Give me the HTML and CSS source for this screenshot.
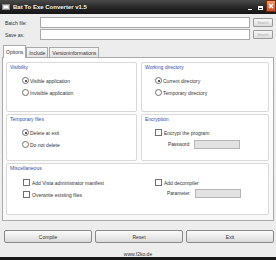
FILE: index.html
```html
<!DOCTYPE html>
<html>
<head>
<meta charset="utf-8">
<link rel="stylesheet" href="styles.css">
</head>
<body>
<div class="win">
  <div class="titlebar">
    <span class="appicon"><span class="appscreen"></span></span>
    <span class="title">Bat To Exe Converter v1.5</span>
    <span class="ctl min"><span></span></span>
    <span class="ctl max"><span></span></span>
    <span class="ctl close"><svg width="6" height="6" viewBox="0 0 6 6"><path d="M1 1L5 5M5 1L1 5" stroke="#fff" stroke-width="1.4"/></svg></span>
  </div>
  <div class="body">
    <div class="filerow">
      <span class="flabel">Batch file:</span>
      <span class="finput"></span>
      <span class="fbtn">Search</span>
    </div>
    <div class="filerow">
      <span class="flabel">Save as:</span>
      <span class="finput"></span>
      <span class="fbtn">Search</span>
    </div>
    <div class="tabs">
      <span class="tab active">Options</span>
      <span class="tab">Include</span>
      <span class="tab">Versioninformations</span>
    </div>
    <div class="panel">
      <div class="grid">
        <div class="group left">
          <div class="gtitle">Visibility</div>
          <div class="opts">
            <div class="opt"><span class="radio on"></span>Visible application</div>
            <div class="opt"><span class="radio"></span>Invisible application</div>
          </div>
        </div>
        <div class="group right">
          <div class="gtitle">Working directory</div>
          <div class="opts">
            <div class="opt"><span class="radio on"></span>Current directory</div>
            <div class="opt"><span class="radio"></span>Temporary directory</div>
          </div>
        </div>
        <div class="group left">
          <div class="gtitle">Temporary files</div>
          <div class="opts">
            <div class="opt"><span class="radio on"></span>Delete at exit</div>
            <div class="opt"><span class="radio"></span>Do not delete</div>
          </div>
        </div>
        <div class="group right">
          <div class="gtitle">Encryption</div>
          <div class="opts">
            <div class="opt"><span class="check"></span>Encrypt the program</div>
            <div class="field"><span class="flab">Password:</span><span class="fin"></span></div>
          </div>
        </div>
        <div class="group wide">
          <div class="gtitle">Miscellaneous</div>
          <div class="misc">
            <div class="opts">
              <div class="opt"><span class="check"></span>Add Vista administrator manifest</div>
              <div class="opt"><span class="check"></span>Overwrite existing files</div>
            </div>
            <div class="opts">
              <div class="opt"><span class="check"></span>Add decompiler</div>
              <div class="field"><span class="flab">Parameter:</span><span class="fin"></span></div>
            </div>
          </div>
        </div>
      </div>
    </div>
    <div class="buttons">
      <span class="btn">Compile</span>
      <span class="btn">Reset</span>
      <span class="btn">Exit</span>
    </div>
    <div class="link">www.f2ko.de</div>
  </div>
  <div class="bottom"></div>
</div>
</body>
</html>
```
FILE: styles.css
```css
html, body { margin: 0; padding: 0; }
body {
  width: 276px; height: 260px; overflow: hidden;
  font-family: "Liberation Sans", Arial, sans-serif;
  font-size: 5px; color: #333;
  background: #ededed;
}
.win { width: 276px; height: 260px; display: flex; flex-direction: column; background: #ededed; }
.titlebar {
  height: 14px; flex: none;
  background: linear-gradient(#4a4a4a, #262626 55%, #161616);
  display: flex; align-items: flex-start;
  padding-left: 2px; box-sizing: border-box;
}
.appicon { width: 8px; height: 6px; margin-top: 4px; margin-right: 3px; background: #d0d0d0; border: 1px solid #888; box-sizing: border-box; display: flex; align-items: flex-end; justify-content: center; padding-bottom: 1px; }
.appscreen { width: 4px; height: 2px; background: #fff; }
.title { color: #f4f4f4; font-weight: bold; font-size: 6px; line-height: 14px; white-space: nowrap; margin-right: auto; }
.ctl { display: flex; align-items: center; justify-content: center; box-sizing: border-box; margin-left: 2px; }
.min, .max { width: 8px; height: 9px; margin-top: 3px; }
.min span { width: 4px; height: 1px; background: #fff; margin-top: 4px; }
.max span { width: 5px; height: 4px; border: 1px solid #fff; border-top-width: 2px; box-sizing: border-box; }
.close { width: 10px; height: 12px; background: linear-gradient(#ef9a6a, #c8502a); border: 1px solid #7a2a10; }
.close svg { display: block; }
.body { flex: 1; display: flex; flex-direction: column; padding: 3px 2px 0 2px; }
.filerow { display: flex; align-items: center; height: 11px; margin-bottom: 1px; }
.flabel { width: 38px; padding-left: 3px; box-sizing: border-box; }
.finput { width: 210px; height: 11px; background: #fff; border: 1px solid #a9a9a9; box-sizing: border-box; }
.fbtn { width: 20px; height: 9px; margin-left: 3px; border: 1px solid #9a9a9a; border-radius: 1px; background: linear-gradient(#f8f8f8, #dcdcdc); box-sizing: border-box; font-size: 3.5px; color: #aaa; display: flex; align-items: center; justify-content: center; }
.tabs { display: flex; margin-top: 4px; height: 12px; align-items: flex-end; padding-left: 1px; position: relative; z-index: 1; }
.tab { height: 10px; padding: 0 2px; border: 1px solid #aaa; border-bottom: none; background: linear-gradient(#f6f6f6, #e4e4e4); display: flex; align-items: center; box-sizing: border-box; margin-right: 1px; }
.tab.active { height: 13px; background: #fff; padding: 0 2px; margin-bottom: -1px; margin-right: 0; }
.panel { width: 272px; height: 164px; border: 1px solid #aaa; background: linear-gradient(#fff, #f8f8f8); box-sizing: border-box; padding: 4px 0 0 3px; }
.grid { display: grid; grid-template-columns: 131px 128px; column-gap: 4px; row-gap: 2px; grid-template-rows: 50px 47px 52px; }
.group { border: 1px solid #d9d9d9; border-radius: 2px; background: #fff; }
.group.wide { grid-column: 1 / 3; }
.gtitle { color: #3050a8; height: 6px; padding: 1px 0 0 3px; line-height: 6px; font-size: 5px; }
.opts { display: flex; flex-direction: column; gap: 5px; padding: 7px 0 0 15px; }
.right .opts { padding-left: 13px; }
.opt { display: flex; align-items: center; height: 7px; white-space: nowrap; }
.radio { width: 5px; height: 5px; border: 1px solid #6f6f6f; border-radius: 50%; background: #fff; margin-right: 1px; position: relative; flex: none; }
.radio.on::after { content: ""; position: absolute; left: 1.5px; top: 1.5px; width: 2px; height: 2px; border-radius: 50%; background: #222; }
.check { width: 5px; height: 5px; border: 1px solid #6f6f6f; background: #fff; margin-right: 2px; flex: none; }
.field { display: flex; align-items: center; padding-left: 13px; margin-top: -1px; }
.flab { width: 26px; font-size: 4.8px; }
.fin { width: 46px; height: 9px; background: #e2e2e2; border: 1px solid #b5b5b5; box-sizing: border-box; }
.misc { display: grid; grid-template-columns: 148px 110px; padding-top: 1px; }
.misc .opts { padding-left: 16px; }
.misc .opts + .opts { padding-left: 0; }
.misc .field { padding-left: 12px; margin-top: -2px; }
.misc .flab { width: 28px; }
.buttons { display: flex; gap: 3px; margin-top: 9px; padding-left: 2px; }
.btn { width: 88px; height: 13px; border: 1px solid #8a8a8a; border-radius: 2px; box-sizing: border-box; background: linear-gradient(#fbfbfb, #ececec 50%, #dadada); display: flex; align-items: center; justify-content: center; }
.link { text-align: center; margin-top: 8px; font-size: 5px; text-decoration: underline; color: #333; }
.bottom { height: 3px; background: #1a1a1a; flex: none; }
```
